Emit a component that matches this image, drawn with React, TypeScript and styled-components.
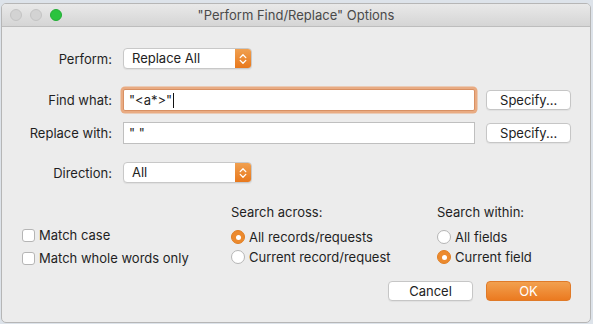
import React from 'react';
import styled, { createGlobalStyle, css } from 'styled-components';

const GlobalStyle = createGlobalStyle`
  html, body {
    margin: 0;
    padding: 0;
    background: #dde3ea;
  }
  body {
    font-family: Inter, 'Noto Sans', 'Liberation Sans', sans-serif;
    font-size: 13px;
    color: #222;
    -webkit-font-smoothing: antialiased;
  }
`;

const SCPage = styled.div`
  width: 593px;
  height: 324px;
  box-sizing: border-box;
  padding: 3px 2px 1px 1px;
`;

const SCWindow = styled.div`
  height: 100%;
  box-sizing: border-box;
  border: 1px solid #b6b6b6;
  border-radius: 5px;
  background: #ececec;
  overflow: hidden;
  display: flex;
  flex-direction: column;
`;

const SCTitleBar = styled.div`
  position: relative;
  height: 22px;
  flex: none;
  display: flex;
  align-items: center;
  justify-content: center;
  background: linear-gradient(#e9e9e9, #d5d5d5);
  border-bottom: 1px solid #bdbdbd;
  color: #4a4a4a;
  font-size: 13px;
`;

const SCLights = styled.div`
  position: absolute;
  left: 8px;
  top: 5px;
  display: flex;
  gap: 8px;
`;

const SCLight = styled.span<{ $active?: boolean }>`
  width: 12px;
  height: 12px;
  border-radius: 50%;
  box-sizing: border-box;
  ${({ $active }) =>
    $active
      ? css`
          background: #2ac33f;
          border: 1px solid #22ad35;
        `
      : css`
          background: #d3d3d3;
          border: 1px solid #c4c4c4;
        `}
`;

const SCBody = styled.div`
  flex: 1;
  display: flex;
  flex-direction: column;
  padding: 21px 19px 0 0;
`;

const SCRow = styled.div<{ $top: number }>`
  display: flex;
  align-items: center;
  margin-top: ${({ $top }) => $top}px;
`;

const SCLabel = styled.label`
  width: 110px;
  flex: none;
  text-align: right;
  margin-right: 11px;
  color: #1f1f1f;
`;

const SCPopup = styled.div`
  width: 129px;
  height: 21px;
  box-sizing: border-box;
  display: flex;
  align-items: stretch;
  background: #fff;
  border: 1px solid #c8c8c8;
  border-radius: 4px;
  overflow: hidden;
  box-shadow: 0 1px 1px rgba(0, 0, 0, 0.06);
`;

const SCPopupText = styled.span`
  flex: 1;
  padding-left: 8px;
  line-height: 19px;
  color: #222;
`;

const SCPopupArrow = styled.span`
  width: 16px;
  display: flex;
  align-items: center;
  justify-content: center;
  background: linear-gradient(#f0a050, #e8781c);
`;

const SCField = styled.div<{ $focused?: boolean }>`
  width: 354px;
  height: 22px;
  box-sizing: border-box;
  background: #fff;
  border: 1px solid #bfbfbf;
  padding-left: 5px;
  display: flex;
  align-items: center;
  color: #1f1f1f;
  ${({ $focused }) =>
    $focused &&
    css`
      border-color: #d89063;
      border-radius: 2px;
      box-shadow: 0 0 0 2.5px rgba(233, 160, 112, 0.85);
    `}
`;

const SCCaret = styled.span`
  display: inline-block;
  width: 1px;
  height: 15px;
  background: #111;
  margin-left: 1px;
`;

const SCButton = styled.button<{ $primary?: boolean }>`
  width: 85px;
  height: 20px;
  box-sizing: border-box;
  padding: 0;
  font-family: inherit;
  font-size: 13px;
  border-radius: 4px;
  ${({ $primary }) =>
    $primary
      ? css`
          color: #fff;
          border: 1px solid #e07a28;
          background: linear-gradient(#f2a04f, #eb7a20);
        `
      : css`
          color: #222;
          border: 1px solid #c6c6c6;
          background: #fff;
          box-shadow: 0 1px 1px rgba(0, 0, 0, 0.05);
        `}
`;

const SCOptions = styled.div`
  margin-top: 20px;
  padding-left: 20px;
  display: grid;
  grid-template-columns: 209px 206px 1fr;
  grid-template-rows: 17px 7px 20px 20px;
  align-items: center;
`;

const SCHeading = styled.div<{ $col: number }>`
  grid-column: ${({ $col }) => $col};
  grid-row: 1;
  color: #1f1f1f;
`;

const SCOption = styled.label<{ $col: number; $row: number; $shift?: number }>`
  grid-column: ${({ $col }) => $col};
  grid-row: ${({ $row }) => $row + 1};
  display: flex;
  align-items: center;
  gap: 4px;
  color: #1f1f1f;
  transform: translateY(${({ $shift = 0 }) => $shift}px);
`;

const SCCheck = styled.span`
  width: 13px;
  height: 13px;
  box-sizing: border-box;
  background: #fff;
  border: 1px solid #b5b5b5;
  border-radius: 3px;
`;

const SCRadio = styled.span<{ $on?: boolean }>`
  width: 14px;
  height: 14px;
  box-sizing: border-box;
  border-radius: 50%;
  display: flex;
  align-items: center;
  justify-content: center;
  ${({ $on }) =>
    $on
      ? css`
          background: #ec8a2e;
          border: 1px solid #e07e22;
          &::after {
            content: '';
            width: 5px;
            height: 5px;
            border-radius: 50%;
            background: #fff;
          }
        `
      : css`
          background: #fff;
          border: 1px solid #b5b5b5;
        `}
`;

const SCFooter = styled.div`
  margin-top: 14px;
  display: flex;
  justify-content: flex-end;
  gap: 13px;
`;

const UpDown = () => (
  <svg width="8" height="12" viewBox="0 0 8 12">
    <path
      d="M1.2 4.6 L4 1.8 L6.8 4.6 M1.2 7.4 L4 10.2 L6.8 7.4"
      fill="none"
      stroke="#fff"
      strokeWidth="1.3"
      strokeLinecap="round"
      strokeLinejoin="round"
    />
  </svg>
);

const Popup = ({ value }: { value: string }) => (
  <SCPopup>
    <SCPopupText>{value}</SCPopupText>
    <SCPopupArrow>
      <UpDown />
    </SCPopupArrow>
  </SCPopup>
);

export default function App() {
  return (
    <>
      <GlobalStyle />
      <SCPage>
        <SCWindow>
          <SCTitleBar>
            <SCLights>
              <SCLight />
              <SCLight />
              <SCLight $active />
            </SCLights>
            "Perform Find/Replace" Options
          </SCTitleBar>

          <SCBody>
            <SCRow $top={0}>
              <SCLabel>Perform:</SCLabel>
              <Popup value="Replace All" />
            </SCRow>

            <SCRow $top={20}>
              <SCLabel>Find what:</SCLabel>
              <SCField $focused>
                "&lt;a*&gt;"
                <SCCaret />
              </SCField>
              <SCButton style={{ marginLeft: 11 }}>Specify...</SCButton>
            </SCRow>

            <SCRow $top={11}>
              <SCLabel>Replace with:</SCLabel>
              <SCField>" "</SCField>
              <SCButton style={{ marginLeft: 11 }}>Specify...</SCButton>
            </SCRow>

            <SCRow $top={18}>
              <SCLabel>Direction:</SCLabel>
              <Popup value="All" />
            </SCRow>

            <SCOptions>
              <SCHeading $col={2}>Search across:</SCHeading>
              <SCHeading $col={3}>Search within:</SCHeading>

              <SCOption $col={1} $row={2} $shift={-2}>
                <SCCheck />
                Match case
              </SCOption>
              <SCOption $col={1} $row={3} $shift={1}>
                <SCCheck />
                Match whole words only
              </SCOption>

              <SCOption $col={2} $row={2}>
                <SCRadio $on />
                All records/requests
              </SCOption>
              <SCOption $col={2} $row={3}>
                <SCRadio />
                Current record/request
              </SCOption>

              <SCOption $col={3} $row={2}>
                <SCRadio />
                All fields
              </SCOption>
              <SCOption $col={3} $row={3}>
                <SCRadio $on />
                Current field
              </SCOption>
            </SCOptions>

            <SCFooter>
              <SCButton>Cancel</SCButton>
              <SCButton $primary>OK</SCButton>
            </SCFooter>
          </SCBody>
        </SCWindow>
      </SCPage>
    </>
  );
}
